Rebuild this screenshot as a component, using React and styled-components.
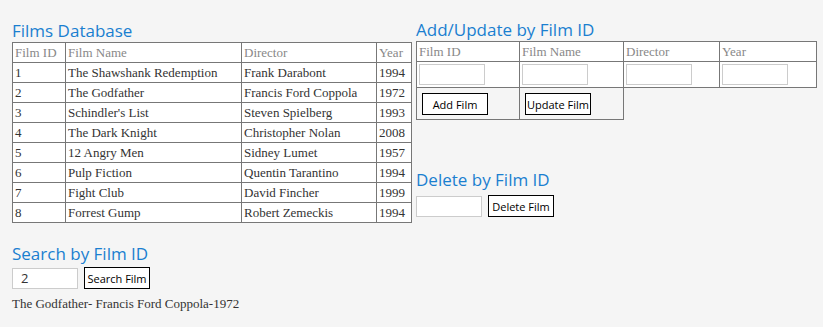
import { useState } from "react";
import styled, { createGlobalStyle } from "styled-components";

const GlobalStyle = createGlobalStyle`
  body {
    margin: 0;
    background-color: #f5f5f5;
    font-family: "Liberation Serif", "Times New Roman", serif;
    color: #333;
  }
`;

const Page = styled.div`
  display: flex;
  gap: 5px;
  padding: 0 12px;
`;

const Column = styled.div`
  width: 399px;
  display: flex;
  flex-direction: column;
`;

const Heading = styled.h2`
  font-family: "Open Sans", "Noto Sans", sans-serif;
  font-weight: 400;
  font-size: 17px;
  line-height: 22px;
  color: #1a7fd0;
  margin: ${(p) => p.$top || 18}px 0 0 0;
`;

const Table = styled.table`
  border-collapse: collapse;
  width: ${(p) => p.$w || 399}px;
  font-size: 13px;
  table-layout: fixed;
`;

const Cell = styled.td`
  border: 1px solid #777;
  background-color: #fff;
  padding: 2px 2px;
  height: 15px;
  line-height: 15px;
  color: ${(p) => (p.$head ? "#888" : "#333")};
  vertical-align: middle;
  white-space: nowrap;
  overflow: hidden;
`;

const FormCell = styled.td`
  border: 1px solid #777;
  background-color: ${(p) => (p.$plain ? "transparent" : "#fff")};
  padding: ${(p) => p.$pad || "2px 2px"};
  vertical-align: middle;
`;

const Input = styled.input`
  box-sizing: border-box;
  width: 66px;
  height: 21px;
  border: 1px solid #ccc;
  background: #fff;
  padding: 1px 8px;
  font-family: "Open Sans", sans-serif;
  font-size: 13px;
  color: #333;
  outline: none;
`;

const Button = styled.button`
  box-sizing: border-box;
  width: 66px;
  height: 22px;
  border: 1px solid #000;
  background: #fff;
  color: #000;
  font-family: "Open Sans", "Noto Sans", sans-serif;
  font-size: 11px;
  padding: 0;
`;

const InlineRow = styled.div`
  display: flex;
  align-items: center;
  gap: 6px;
  margin-top: ${(p) => p.$top || 2}px;
`;

const Result = styled.p`
  margin: 7px 0 0 0;
  font-size: 13px;
  color: #333;
`;

const films = [
  [1, "The Shawshank Redemption", "Frank Darabont", 1994],
  [2, "The Godfather", "Francis Ford Coppola", 1972],
  [3, "Schindler's List", "Steven Spielberg", 1993],
  [4, "The Dark Knight", "Christopher Nolan", 2008],
  [5, "12 Angry Men", "Sidney Lumet", 1957],
  [6, "Pulp Fiction", "Quentin Tarantino", 1994],
  [7, "Fight Club", "David Fincher", 1999],
  [8, "Forrest Gump", "Robert Zemeckis", 1994],
];

export default function App() {
  const [search, setSearch] = useState("2");
  const found = films.find((f) => String(f[0]) === search);

  return (
    <>
      <GlobalStyle />
      <Page>
        <Column>
          <Heading $top={20}>Films Database</Heading>
          <Table>
            <colgroup>
              <col style={{ width: 53 }} />
              <col style={{ width: 176 }} />
              <col style={{ width: 135 }} />
              <col style={{ width: 35 }} />
            </colgroup>
            <tbody>
              <tr>
                <Cell $head>Film ID</Cell>
                <Cell $head>Film Name</Cell>
                <Cell $head>Director</Cell>
                <Cell $head>Year</Cell>
              </tr>
              {films.map((f) => (
                <tr key={f[0]}>
                  <Cell>{f[0]}</Cell>
                  <Cell>{f[1]}</Cell>
                  <Cell>{f[2]}</Cell>
                  <Cell>{f[3]}</Cell>
                </tr>
              ))}
            </tbody>
          </Table>
          <Heading $top={20}>Search by Film ID</Heading>
          <InlineRow>
            <Input value={search} onChange={(e) => setSearch(e.target.value)} />
            <Button>Search Film</Button>
          </InlineRow>
          <Result>
            {found ? `${found[1]}- ${found[2]}-${found[3]}` : ""}
          </Result>
        </Column>
        <Column>
          <Heading $top={19}>Add/Update by Film ID</Heading>
          <Table $w={400}>
            <colgroup>
              <col style={{ width: 103 }} />
              <col style={{ width: 104 }} />
              <col style={{ width: 96 }} />
              <col style={{ width: 97 }} />
            </colgroup>
            <tbody>
              <tr>
                <Cell $head>Film ID</Cell>
                <Cell $head>Film Name</Cell>
                <Cell $head>Director</Cell>
                <Cell $head>Year</Cell>
              </tr>
              <tr>
                <FormCell><Input /></FormCell>
                <FormCell><Input /></FormCell>
                <FormCell><Input /></FormCell>
                <FormCell><Input /></FormCell>
              </tr>
              <tr>
                <FormCell $plain $pad="5px 2px 4px 5px"><Button>Add Film</Button></FormCell>
                <FormCell $plain $pad="5px 2px 4px 5px"><Button>Update Film</Button></FormCell>
              </tr>
            </tbody>
          </Table>
          <Heading $top={49}>Delete by Film ID</Heading>
          <InlineRow $top={4}>
            <Input />
            <Button>Delete Film</Button>
          </InlineRow>
        </Column>
      </Page>
    </>
  );
}
